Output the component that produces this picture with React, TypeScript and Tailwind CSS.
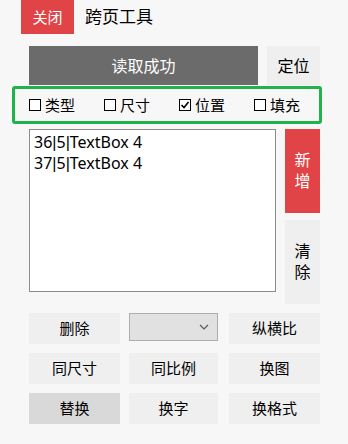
import React from 'react'

const font = { fontFamily: '"Noto Sans", "Noto Sans CJK SC", sans-serif' }

function Check({ label, checked }: { label: string; checked?: boolean }) {
    return (
        <div className="flex items-center w-[75px] shrink-0">
            <div className="w-[12px] h-[12px] border border-black bg-white flex items-center justify-center">
                {checked && (
                    <svg width="10" height="10" viewBox="0 0 10 10">
                        <path d="M1.5 5 L4 7.5 L8.5 2" stroke="black" strokeWidth="1.6" fill="none" />
                    </svg>
                )}
            </div>
            <span className="ml-[4px] text-[15px] leading-none text-black">{label}</span>
        </div>
    )
}

function Btn({ label, w, dark }: { label: string; w: string; dark?: boolean }) {
    return (
        <div className={`${w} h-[31px] flex items-center justify-center text-[15px] text-black ${dark ? 'bg-[#d9d9d9]' : 'bg-[#efefef]'}`}>
            {label}
        </div>
    )
}

function Line({ text }: { text: string }) {
    const parts = text.split('|')
    return (
        <div>
            {parts.map((p, i) => (
                <React.Fragment key={i}>
                    {i > 0 && <span className="font-['Liberation_Sans']">|</span>}
                    {p}
                </React.Fragment>
            ))}
        </div>
    )
}

export default function App() {
    return (
        <div className="w-[348px] h-[444px] bg-[#f7f7f7] overflow-hidden" style={font}>
            {/* 标题栏 */}
            <div className="flex items-center">
                <div className="ml-[21px] w-[53px] h-[34px] bg-[#e04446] text-white text-[15px] flex items-center justify-center">
                    关闭
                </div>
                <span className="ml-[11px] text-[17px] text-black">跨页工具</span>
            </div>

            {/* 读取 */}
            <div className="flex mt-[12px] pl-[29px] gap-[9px]">
                <div className="w-[229px] h-[39px] bg-[#6b6b6b] text-white text-[16px] flex items-center justify-center">
                    读取成功
                </div>
                <div className="w-[53px] h-[39px] bg-[#efefef] text-black text-[16px] flex items-center justify-center">
                    定位
                </div>
            </div>

            {/* 选项 */}
            <div className="ml-[12px] mt-[1px] w-[310px] h-[38px] border-[3px] border-[#21b24b] rounded-[3px] flex items-center pl-[14px]">
                <Check label="类型" />
                <Check label="尺寸" />
                <Check label="位置" checked />
                <Check label="填充" />
            </div>

            {/* 列表 */}
            <div className="flex mt-[5px] pl-[29px] gap-[9px]">
                <div className="w-[247px] h-[163px] bg-white border border-[#8a8a8f] px-[4px] pt-[2px] text-[16px] leading-[20px] text-black">
                    <Line text="36|5|TextBox 4" />
                    <Line text="37|5|TextBox 4" />
                </div>
                <div className="flex flex-col gap-[7px] w-[35px]">
                    <div className="h-[84px] bg-[#e04446] text-white text-[16px] leading-[21px] flex flex-col items-center justify-center">
                        <span>新</span>
                        <span>增</span>
                    </div>
                    <div className="h-[84px] bg-[#efefef] text-black text-[16px] leading-[21px] flex flex-col items-center justify-center">
                        <span>清</span>
                        <span>除</span>
                    </div>
                </div>
            </div>

            {/* 操作按钮 */}
            <div className="mt-[9px] pl-[29px] flex flex-col gap-[9px]">
                <div className="flex">
                    <Btn label="删除" w="w-[91px]" />
                    <div className="ml-[9px] w-[89px] h-[28px] bg-[#e1e1e1] border border-[#adadad] flex items-center justify-end pr-[8px]">
                        <svg width="10" height="6" viewBox="0 0 10 6">
                            <path d="M1 1 L5 5 L9 1" stroke="#555" strokeWidth="1.1" fill="none" />
                        </svg>
                    </div>
                    <div className="ml-[11px]">
                        <Btn label="纵横比" w="w-[91px]" />
                    </div>
                </div>
                <div className="flex">
                    <Btn label="同尺寸" w="w-[91px]" />
                    <div className="ml-[9px]">
                        <Btn label="同比例" w="w-[89px]" />
                    </div>
                    <div className="ml-[11px]">
                        <Btn label="换图" w="w-[91px]" />
                    </div>
                </div>
                <div className="flex">
                    <Btn label="替换" w="w-[91px]" dark />
                    <div className="ml-[9px]">
                        <Btn label="换字" w="w-[89px]" />
                    </div>
                    <div className="ml-[11px]">
                        <Btn label="换格式" w="w-[91px]" />
                    </div>
                </div>
            </div>
        </div>
    )
}
